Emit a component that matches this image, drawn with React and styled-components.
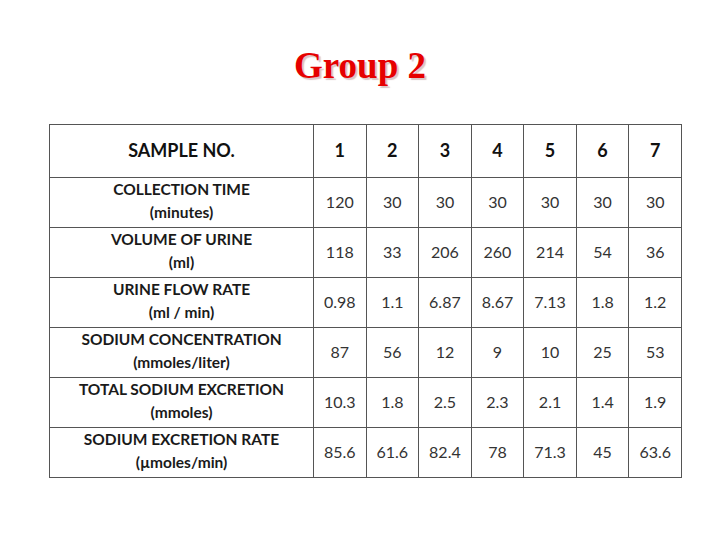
import React from "react";
import styled, { createGlobalStyle } from "styled-components";

const GlobalStyle = createGlobalStyle`
  html, body {
    margin: 0;
    padding: 0;
    background: #ffffff;
  }
`;

const columns = ["1", "2", "3", "4", "5", "6", "7"];

const rows = [
  { title: "COLLECTION TIME", unit: "(minutes)", values: ["120", "30", "30", "30", "30", "30", "30"] },
  { title: "VOLUME OF URINE", unit: "(ml)", values: ["118", "33", "206", "260", "214", "54", "36"], short: true },
  { title: "URINE FLOW RATE", unit: "(ml / min)", values: ["0.98", "1.1", "6.87", "8.67", "7.13", "1.8", "1.2"] },
  { title: "SODIUM CONCENTRATION", unit: "(mmoles/liter)", values: ["87", "56", "12", "9", "10", "25", "53"] },
  { title: "TOTAL SODIUM EXCRETION", unit: "(mmoles)", values: ["10.3", "1.8", "2.5", "2.3", "2.1", "1.4", "1.9"] },
  { title: "SODIUM EXCRETION RATE", unit: "(\u00b5moles/min)", values: ["85.6", "61.6", "82.4", "78", "71.3", "45", "63.6"] },
];

const App = () => {
  return (
    <Slide>
      <GlobalStyle />
      <Title>Group 2</Title>
      <DataTable>
        <colgroup>
          <col style={{ width: 264 }} />
          {columns.map((c) => (
            <col key={c} />
          ))}
        </colgroup>
        <thead>
          <HeadRow>
            <HeadCell>SAMPLE NO.</HeadCell>
            {columns.map((c) => (
              <HeadCell key={c}>{c}</HeadCell>
            ))}
          </HeadRow>
        </thead>
        <tbody>
          {rows.map((row) => (
            <BodyRow key={row.title} $short={row.short}>
              <LabelCell>
                <div>{row.title}</div>
                <div>{row.unit}</div>
              </LabelCell>
              {row.values.map((v, i) => (
                <ValueCell key={i}>{v}</ValueCell>
              ))}
            </BodyRow>
          ))}
        </tbody>
      </DataTable>
    </Slide>
  );
};

export default App;

const Slide = styled.div`
  width: 720px;
  height: 540px;
  box-sizing: border-box;
  padding-top: 46px;
  display: flex;
  flex-direction: column;
  align-items: flex-start;
  background: #ffffff;
`;

const Title = styled.h1`
  align-self: center;
  margin: 0;
  height: 78px;
  font-family: "Liberation Serif", "DejaVu Serif", serif;
  font-weight: 700;
  font-size: 37px;
  line-height: 40px;
  color: #e60000;
  text-shadow: 2px 2px 1px rgba(150, 90, 90, 0.35);
`;

const DataTable = styled.table`
  margin-left: 49px;
  width: 633px;
  table-layout: fixed;
  border-collapse: collapse;
  border: 1px solid #444444;
  font-family: Lato, "Liberation Sans", sans-serif;

  td,
  th {
    border: 1px solid #555555;
    padding: 0;
    text-align: center;
    vertical-align: middle;
  }
`;

const HeadRow = styled.tr`
  height: 53px;
`;

const HeadCell = styled.th`
  font-size: 18px;
  font-weight: 700;
  color: #111111;
  && {
    padding-bottom: 3px;
  }
`;

const BodyRow = styled.tr`
  height: ${(p) => (p.$short ? 49 : 50)}px;
`;

const LabelCell = styled.td`
  font-size: 15.5px;
  font-weight: 700;
  line-height: 22.5px;
  color: #1a1a1a;
  && {
    padding-bottom: 4px;
  }
`;

const ValueCell = styled.td`
  font-size: 16px;
  font-weight: 400;
  color: #333333;
  && {
    padding-bottom: 3px;
  }
`;
